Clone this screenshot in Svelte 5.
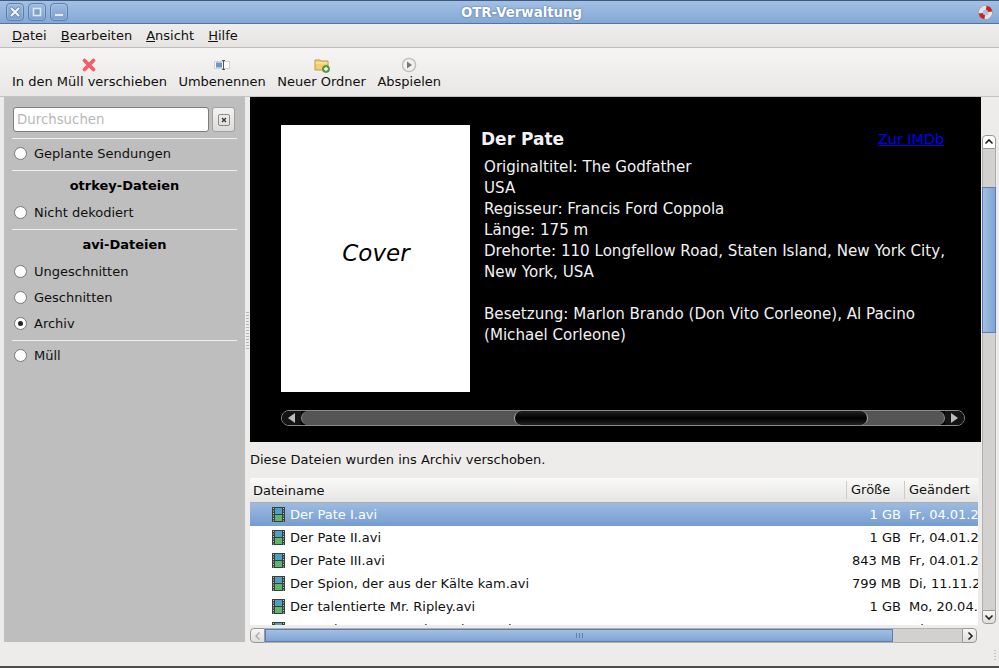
<script>
  const rows = [
    { name: 'Der Pate I.avi', size: '1 GB', date: 'Fr, 04.01.2008' },
    { name: 'Der Pate II.avi', size: '1 GB', date: 'Fr, 04.01.2008' },
    { name: 'Der Pate III.avi', size: '843 MB', date: 'Fr, 04.01.2008' },
    { name: 'Der Spion, der aus der Kälte kam.avi', size: '799 MB', date: 'Di, 11.11.2008' },
    { name: 'Der talentierte Mr. Ripley.avi', size: '1 GB', date: 'Mo, 20.04.2009' },
    { name: 'Der unbeugsame Hai Sandrart.avi', size: '702 MB', date: 'Mi, 10.09.2008' }
  ];
</script>

<div class="window">
  <header class="titlebar">
    <div class="wm-buttons">
      <button class="wm-btn" aria-label="close">
        <svg viewBox="0 0 12 12" width="12" height="12"><path d="M2.5 2.5l7 7M9.5 2.5l-7 7" stroke="#5d7fae" stroke-width="3.6" stroke-linecap="round"/><path d="M2.5 2.5l7 7M9.5 2.5l-7 7" stroke="#f2f5fa" stroke-width="2.2" stroke-linecap="round"/></svg>
      </button>
      <button class="wm-btn" aria-label="maximize">
        <svg viewBox="0 0 12 12" width="12" height="12"><rect x="2.5" y="2.5" width="7" height="7" fill="#7f9fcb" stroke="#dfe8f4" stroke-width="1.6"/></svg>
      </button>
      <button class="wm-btn" aria-label="minimize">
        <svg viewBox="0 0 12 12" width="12" height="12"><rect x="2" y="8" width="8" height="2" fill="#e6edf6"/></svg>
      </button>
    </div>
    <div class="title">OTR-Verwaltung</div>
    <svg class="app-icon" viewBox="0 0 16 16" width="15" height="15">
      <circle cx="8" cy="8" r="7.6" fill="#8a8a8a"/>
      <circle cx="8" cy="8" r="5" fill="none" stroke="#e4e4e4" stroke-width="4.4"/>
      <path d="M8.8 3A5 5 0 0 1 13 7.2M7.2 13A5 5 0 0 1 3 8.8" fill="none" stroke="#d0201a" stroke-width="4.4"/>
      <circle cx="8" cy="8" r="2.8" fill="#a9c4e6"/>
    </svg>
  </header>

  <nav class="menubar">
    <span class="menu"><u>D</u>atei</span>
    <span class="menu"><u>B</u>earbeiten</span>
    <span class="menu"><u>A</u>nsicht</span>
    <span class="menu"><u>H</u>ilfe</span>
  </nav>

  <div class="toolbar">
    <div class="tool">
      <svg viewBox="0 0 16 16" width="16" height="16"><path d="M3.5 3.5l9 9M12.5 3.5l-9 9" stroke="#f0606a" stroke-width="3.8" stroke-linecap="round"/></svg>
      <span>In den Müll verschieben</span>
    </div>
    <div class="tool">
      <svg viewBox="0 0 16 16" width="16" height="16">
        <rect x="0.5" y="4.5" width="15" height="7" fill="#fafafa" stroke="#d0d0d0"/>
        <rect x="2" y="5.5" width="6" height="5" fill="#6a93d2"/>
        <path d="M8 3.5h3M8 12.5h3M9.5 3.5v9" stroke="#555" fill="none"/>
      </svg>
      <span>Umbenennen</span>
    </div>
    <div class="tool">
      <svg viewBox="0 0 16 16" width="16" height="16">
        <path d="M1 3h5l1 1h7v9H1z" fill="#f0d070" stroke="#c09a40"/>
        <path d="M1.5 6h12" stroke="#fbeeb0"/>
        <circle cx="12" cy="12" r="3.6" fill="#5aa04a" stroke="#3d7a32" stroke-width=".6"/>
        <path d="M10 12h4M12 10v4" stroke="#fff" stroke-width="1.3"/>
      </svg>
      <span>Neuer Ordner</span>
    </div>
    <div class="tool">
      <svg viewBox="0 0 16 16" width="16" height="16">
        <circle cx="8" cy="8" r="6.6" fill="#f0f0ee" stroke="#bdbdbb" stroke-width="1.4"/>
        <path d="M6 4.5l5 3.5-5 3.5z" fill="#777"/>
      </svg>
      <span>Abspielen</span>
    </div>
  </div>

  <div class="main">
    <aside class="sidebar">
      <div class="search">
        <input class="search-input" placeholder="Durchsuchen" />
        <button class="search-clear" aria-label="clear">
          <svg viewBox="0 0 10 10" width="10" height="10"><path d="M2.5 2.5l5 5M7.5 2.5l-5 5" stroke="#333" stroke-width="1.6"/></svg>
        </button>
      </div>
      <hr class="first" />
      <label class="radio"><i class="dot"></i>Geplante Sendungen</label>
      <hr />
      <h3>otrkey-Dateien</h3>
      <label class="radio"><i class="dot"></i>Nicht dekodiert</label>
      <hr />
      <h3>avi-Dateien</h3>
      <label class="radio"><i class="dot"></i>Ungeschnitten</label>
      <label class="radio"><i class="dot"></i>Geschnitten</label>
      <label class="radio"><i class="dot checked"></i>Archiv</label>
      <hr />
      <label class="radio"><i class="dot"></i>Müll</label>
    </aside>

    <div class="handle"><span class="handle-grip"></span></div>

    <section class="content">
      <div class="left">
        <div class="viewer">
          <div class="movie">
            <div class="cover">Cover</div>
            <div class="info">
              <div class="info-head">
                <span class="movie-title">Der Pate</span>
                <a class="imdb" href="#imdb">Zur IMDb</a>
              </div>
              <p class="details">
                Originaltitel: The Godfather<br />
                USA<br />
                Regisseur: Francis Ford Coppola<br />
                Länge: 175 m<br />
                Drehorte: 110 Longfellow Road, Staten Island, New York City, New York, USA<br />
                <br />
                Besetzung: Marlon Brando (Don Vito Corleone), Al Pacino (Michael Corleone)
              </p>
            </div>
          </div>
          <div class="dark-scroll">
            <span class="dark-arrow left-arrow"></span>
            <div class="dark-track">
              <div class="dark-thumb"></div>
            </div>
            <span class="dark-arrow right-arrow"></span>
          </div>
        </div>

        <div class="message">Diese Dateien wurden ins Archiv verschoben.</div>

        <div class="tree">
          <div class="tree-head">
            <div class="col-name">Dateiname</div>
            <div class="col-size">Größe</div>
            <div class="col-date">Geändert</div>
          </div>
          <div class="tree-body">
            {#each rows as row, i}
              <div class="row" class:selected={i === 0}>
                <svg class="film" viewBox="0 0 13 15" width="13" height="15">
                  <rect x="0" y="0" width="13" height="15" fill="#3a3f3a"/>
                  <rect x="3" y="1" width="7" height="6" fill="#4f9fc4"/>
                  <rect x="3" y="8" width="7" height="6" fill="#5fb56a"/>
                  <path d="M1 1.5h1M1 4h1M1 6.5h1M1 9h1M1 11.5h1M1 14h1M11 1.5h1M11 4h1M11 6.5h1M11 9h1M11 11.5h1M11 14h1" stroke="#c4c8c4" stroke-width="1.1"/>
                </svg>
                <span class="col-name cell">{row.name}</span>
                <span class="col-size cell">{row.size}</span>
                <span class="col-date cell">{row.date}</span>
              </div>
            {/each}
          </div>
        </div>

        <div class="hscroll">
          <button class="hs-btn hs-left" aria-label="left">
            <svg viewBox="0 0 8 10" width="8" height="10"><path d="M5.5 1.5L2 5l3.5 3.5" fill="none" stroke="#aaa" stroke-width="1.4"/></svg>
          </button>
          <div class="hs-track">
            <div class="hs-thumb"><span class="grip"></span></div>
          </div>
          <button class="hs-btn hs-right" aria-label="right">
            <svg viewBox="0 0 8 10" width="8" height="10"><path d="M2.5 1.5L6 5 2.5 8.5" fill="none" stroke="#222" stroke-width="1.6"/></svg>
          </button>
        </div>
      </div>

      <div class="vscroll">
        <button class="vs-btn vs-up" aria-label="up">
          <svg viewBox="0 0 10 8" width="10" height="8"><path d="M1.5 5.5L5 2l3.5 3.5" fill="none" stroke="#222" stroke-width="1.6"/></svg>
        </button>
        <div class="vs-track">
          <div class="vs-thumb"></div>
        </div>
        <button class="vs-btn vs-down" aria-label="down">
          <svg viewBox="0 0 10 8" width="10" height="8"><path d="M1.5 2.5L5 6l3.5-3.5" fill="none" stroke="#222" stroke-width="1.6"/></svg>
        </button>
      </div>
    </section>
  </div>

  <footer class="statusbar"><span class="resize"></span></footer>
</div>

<style>
  :global(body) {
    margin: 0;
    background: #edecea;
  }

  .window {
    width: 999px;
    height: 668px;
    display: flex;
    flex-direction: column;
    overflow: hidden;
    background: #edecea;
    font-family: "DejaVu Sans", sans-serif;
    font-size: 13px;
    color: #101010;
    box-sizing: border-box;
    border-bottom: 2px solid #4e4e4c;
  }

  .titlebar {
    height: 24px;
    flex: none;
    box-sizing: border-box;
    display: flex;
    align-items: center;
    padding: 0 6px;
    background: linear-gradient(#a3c0e3, #84a8d6);
    border-top: 1px solid #3f5a80;
    border-bottom: 1px solid #54749f;
  }

  .wm-buttons {
    display: flex;
    gap: 4px;
  }

  .wm-btn {
    width: 18px;
    height: 18px;
    padding: 0;
    display: flex;
    align-items: center;
    justify-content: center;
    background: linear-gradient(#9dbbe0, #7b9fcd);
    border: 1px solid #5d7fae;
    border-radius: 4px;
    box-shadow: inset 0 0 0 1px rgba(255, 255, 255, 0.15);
  }

  .title {
    flex: 1;
    text-align: center;
    font-weight: bold;
    font-size: 13.33px;
    color: #fff;
    text-shadow: 0 0 2px #3f5f8c;
    margin-right: 3px;
  }

  .app-icon {
    flex: none;
  }

  .menubar {
    height: 24px;
    flex: none;
    display: flex;
    align-items: center;
    gap: 14px;
    padding-left: 12px;
    box-sizing: border-box;
    background: linear-gradient(#eeedeb, #e6e5e3);
    border-bottom: 1px solid #bdbcba;
  }

  .toolbar {
    height: 49px;
    flex: none;
    box-sizing: border-box;
    display: flex;
    gap: 11.5px;
    padding: 9px 0 0 12px;
    background: linear-gradient(#f6f5f4, #e8e7e5);
    border-bottom: 1px solid #c4c3c1;
  }

  .tool {
    display: flex;
    flex-direction: column;
    align-items: center;
    gap: 1px;
    line-height: 16px;
  }

  .main {
    flex: 1;
    min-height: 0;
    display: flex;
    padding-left: 4px;
  }

  .sidebar {
    width: 241px;
    flex: none;
    box-sizing: border-box;
    background: #bebebe;
    padding: 10px 8px 0;
  }

  .search {
    display: flex;
    gap: 3px;
    align-items: center;
    padding-left: 1px;
  }

  .search-input {
    width: 196px;
    height: 25px;
    box-sizing: border-box;
    border: 1px solid #7c7c7a;
    border-radius: 3px;
    background: #fff;
    padding: 0 3px;
    font: inherit;
    font-size: 13.33px;
    outline: none;
  }

  .search-input::placeholder {
    color: #b8b8b8;
    opacity: 1;
  }

  .search-clear {
    width: 23px;
    height: 25px;
    padding: 0;
    display: flex;
    align-items: center;
    justify-content: center;
    background: linear-gradient(#f4f3f2, #dcdbd9);
    border: 1px solid #a0a09e;
    border-radius: 3px;
  }

  .search-clear svg {
    border: 1px solid #8a8a88;
    border-radius: 2px;
    padding: 1px;
    box-sizing: content-box;
    width: 8px;
    height: 8px;
  }

  hr {
    border: 0;
    height: 1px;
    background: #f1f1f1;
    margin: 4px 0 1px;
  }

  hr.first {
    margin-top: 6px;
  }

  .radio {
    display: flex;
    align-items: center;
    gap: 7px;
    height: 26px;
    padding-left: 2px;
  }

  .dot {
    width: 11px;
    height: 11px;
    border-radius: 50%;
    background: #fff;
    border: 1px solid #77767a;
    display: flex;
    align-items: center;
    justify-content: center;
    flex: none;
  }

  .dot.checked::after {
    content: "";
    width: 5px;
    height: 5px;
    border-radius: 50%;
    background: #222;
  }

  h3 {
    margin: 0;
    height: 27px;
    line-height: 28px;
    font-size: 13px;
    font-weight: bold;
    text-align: center;
    color: #000;
  }

  .handle {
    width: 5px;
    flex: none;
    display: flex;
    align-items: center;
    justify-content: center;
  }

  .handle-grip {
    width: 3px;
    height: 40px;
    margin-bottom: 78px;
    background: radial-gradient(circle at center, #b4b4b2 0.7px, transparent 1px) 0 0 / 2px 3px;
  }

  .content {
    flex: 1;
    min-width: 0;
    display: flex;
  }

  .left {
    width: 731px;
    flex: none;
    display: flex;
    flex-direction: column;
  }

  .viewer {
    height: 345px;
    flex: none;
    box-sizing: border-box;
    background: #000;
    color: #f2f2f2;
    padding: 28px 16px 0 31px;
  }

  .movie {
    display: flex;
    gap: 11px;
    height: 267px;
  }

  .cover {
    width: 189px;
    height: 267px;
    flex: none;
    background: #fff;
    color: #000;
    display: flex;
    align-items: center;
    justify-content: center;
    padding: 0 0 12px 1px;
    box-sizing: border-box;
    font-style: italic;
    font-size: 23px;
  }

  .info {
    flex: 1;
    min-width: 0;
  }

  .info-head {
    display: flex;
    justify-content: space-between;
    align-items: center;
    height: 28px;
    padding-right: 21px;
  }

  .movie-title {
    font-size: 17px;
    font-weight: bold;
  }

  .imdb {
    color: #0000ee;
    font-size: 14.3px;
  }

  .details {
    margin: 0;
    padding: 4px 0 0 3px;
    font-size: 15.1px;
    line-height: 21px;
  }

  .dark-scroll {
    display: flex;
    align-items: center;
    height: 16px;
    margin-top: 18px;
    width: 684px;
    box-sizing: border-box;
    border: 1px solid #8a8a8a;
    border-radius: 8px;
    overflow: hidden;
  }

  .dark-arrow {
    width: 19px;
    height: 100%;
    flex: none;
    display: flex;
    align-items: center;
    justify-content: center;
    background: #141414;
  }

  .left-arrow::before {
    content: "";
    border: 5px solid transparent;
    border-left: 0;
    border-right: 7px solid #bbb;
  }

  .right-arrow::before {
    content: "";
    border: 5px solid transparent;
    border-right: 0;
    border-left: 7px solid #bbb;
  }

  .dark-track {
    flex: 1;
    height: 100%;
    box-sizing: border-box;
    background: #555;
    border-left: 1px solid #8a8a8a;
    border-right: 1px solid #8a8a8a;
    border-radius: 7px;
    padding-left: 212px;
    padding-right: 76px;
  }

  .dark-thumb {
    height: 100%;
    box-sizing: border-box;
    background: linear-gradient(#222, #000 50%, #222);
    border-left: 1px solid #aaa;
    border-right: 1px solid #aaa;
    border-radius: 7px;
  }

  .message {
    height: 36px;
    flex: none;
    line-height: 36px;
    box-sizing: border-box;
  }

  .tree {
    height: 147px;
    flex: none;
    width: 728px;
    background: #fff;
    overflow: hidden;
  }

  .tree-head {
    height: 25px;
    box-sizing: border-box;
    display: flex;
    align-items: center;
    background: linear-gradient(#fafaf9, #e6e5e3);
    border-bottom: 1px solid #aeadab;
  }

  .tree-head .col-name {
    flex: 1;
    padding-left: 3px;
  }

  .tree-head .col-size {
    width: 58px;
    box-sizing: border-box;
    border-left: 1px solid #ccc;
    padding-left: 4px;
    line-height: 18px;
  }

  .tree-head .col-date {
    width: 74px;
    box-sizing: border-box;
    border-left: 1px solid #ccc;
    padding-left: 4px;
    line-height: 18px;
    white-space: nowrap;
  }

  .row {
    height: 23px;
    display: flex;
    align-items: center;
    padding-left: 22px;
    white-space: nowrap;
  }

  .row.selected {
    background: linear-gradient(#9cbbe2, #769dd0);
    color: #fff;
  }

  .film {
    flex: none;
    margin-right: 5px;
  }

  .cell.col-name {
    flex: 1;
  }

  .cell.col-size {
    width: 56px;
    text-align: right;
    flex: none;
  }

  .cell.col-date {
    width: 77px;
    flex: none;
    padding-left: 8px;
    box-sizing: border-box;
    overflow: hidden;
  }

  .hscroll {
    height: 15px;
    flex: none;
    width: 727px;
    margin-top: 3px;
    display: flex;
  }

  .hs-btn,
  .vs-btn {
    padding: 0;
    display: flex;
    align-items: center;
    justify-content: center;
    background: linear-gradient(#f7f6f5, #dedddb);
    border: 1px solid #989896;
    flex: none;
  }

  .hs-btn {
    width: 15px;
    height: 15px;
  }

  .hs-left {
    border-radius: 4px 0 0 4px;
  }

  .hs-right {
    border-radius: 0 4px 4px 0;
  }

  .hs-track {
    flex: 1;
    background: #d2d1cf;
    border-top: 1px solid #b0b0ae;
    border-bottom: 1px solid #b0b0ae;
  }

  .hs-thumb {
    width: 628px;
    height: 100%;
    box-sizing: border-box;
    background: linear-gradient(#a3c0e3, #7fa4d4);
    border: 1px solid #5b7eae;
    display: flex;
    align-items: center;
    justify-content: center;
  }

  .grip {
    width: 7px;
    height: 5px;
    background: repeating-linear-gradient(90deg, #5f7fa8 0 1px, transparent 1px 3px);
  }

  .vscroll {
    width: 14px;
    flex: none;
    margin: 38px 0 0 1px;
    height: 489px;
    display: flex;
    flex-direction: column;
  }

  .vs-btn {
    width: 14px;
    height: 14px;
  }

  .vs-up {
    border-radius: 4px 4px 0 0;
    background: #fff;
  }

  .vs-down {
    border-radius: 0 0 4px 4px;
  }

  .vs-track {
    flex: 1;
    box-sizing: border-box;
    background: #d2d1cf;
    border-left: 1px solid #b0b0ae;
    border-right: 1px solid #b0b0ae;
    padding-top: 38px;
  }

  .vs-thumb {
    height: 146px;
    box-sizing: border-box;
    margin: 0 -1px;
    background: linear-gradient(90deg, #a3c0e3, #7fa4d4);
    border: 1px solid #5b7eae;
  }

  .statusbar {
    height: 24px;
    flex: none;
    position: relative;
  }

  .resize {
    position: absolute;
    right: 3px;
    bottom: 4px;
    width: 2px;
    height: 12px;
    background: repeating-linear-gradient(#c0c0be 0 1px, transparent 1px 3px);
  }
</style>
